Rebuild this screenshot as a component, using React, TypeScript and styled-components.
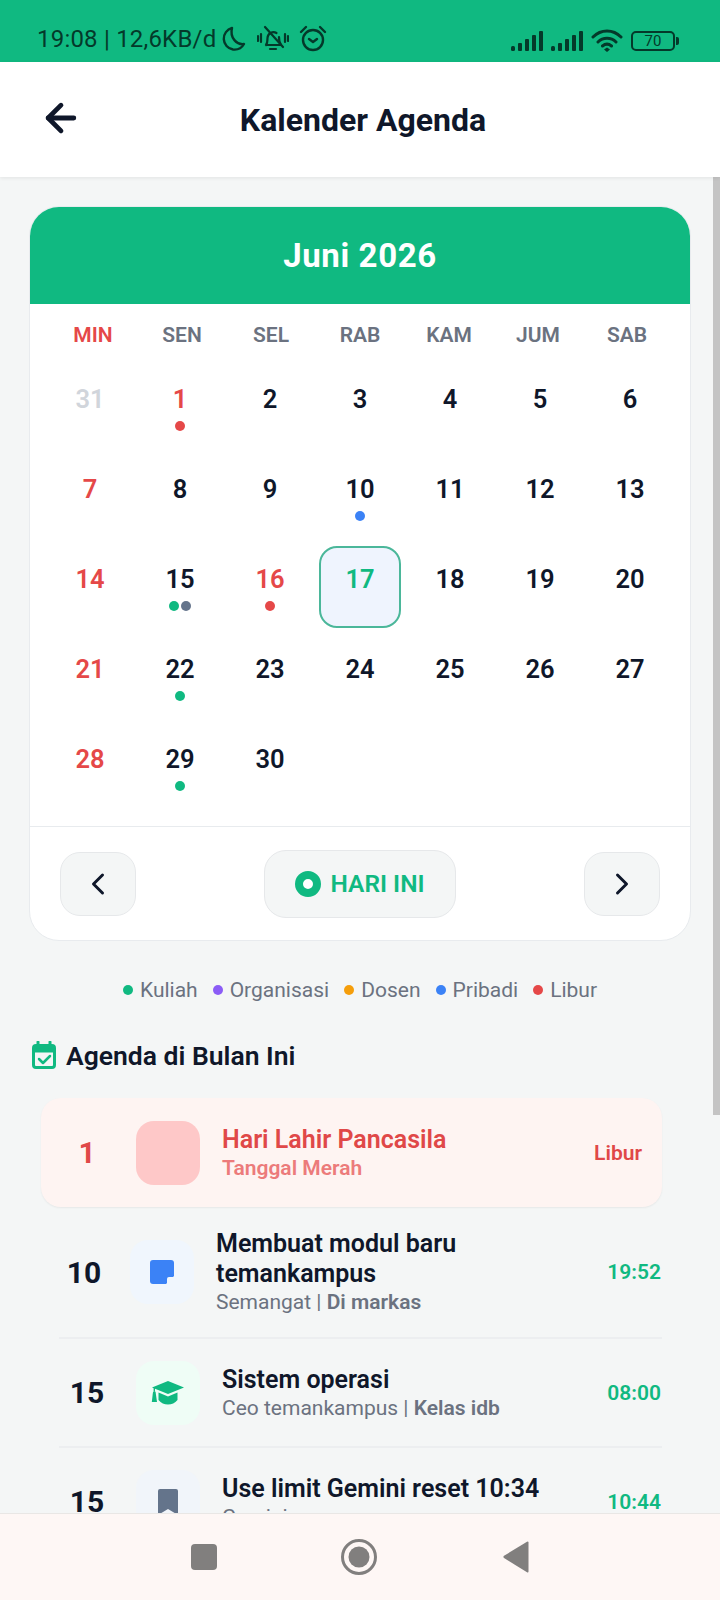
import React from "react";
import styled, { createGlobalStyle } from "styled-components";
import { ArrowLeft, ChevronLeft, ChevronRight } from "lucide-react";

const Global = createGlobalStyle`
  html, body { margin: 0; padding: 0; background: #f4f6f6; }
  * { box-sizing: border-box; }
  body { font-family: Roboto, "Liberation Sans", sans-serif; }
`;

const Page = styled.div`
  position: relative;
  width: 720px;
  height: 1600px;
  display: flex;
  flex-direction: column;
  overflow: hidden;
  background: #f4f6f6;
`;

const StatusBar = styled.div`
  height: 62px;
  flex: none;
  background: #10b981;
  color: #04392a;
  display: flex;
  align-items: flex-end;
  justify-content: space-between;
  padding: 0 42px 9px 37px;
`;
const StatusLeft = styled.div`
  display: flex;
  align-items: center;
  gap: 5px;
`;
const StatusText = styled.span`
  font-size: 24px;
  line-height: 26px;
  letter-spacing: 0.2px;
`;
const StatusRight = styled.div`
  display: flex;
  align-items: center;
  gap: 8px;
`;
const BatteryBox = styled.div`
  position: relative;
  width: 44px;
  height: 20px;
  border: 2px solid #04392a;
  border-radius: 5px;
  font-size: 15px;
  line-height: 16px;
  text-align: center;
  margin-right: 3px;
  &::after {
    content: "";
    position: absolute;
    right: -6px;
    top: 4px;
    width: 3px;
    height: 8px;
    border-radius: 0 2px 2px 0;
    background: #04392a;
  }
`;

const Header = styled.header`
  height: 115px;
  flex: none;
  background: #fff;
  box-shadow: 0 1px 4px rgba(0, 0, 0, 0.08);
  display: flex;
  align-items: center;
  justify-content: center;
  padding-left: 6px;
  position: relative;
  z-index: 2;
  color: #0f172a;
`;
const BackButton = styled.div`
  position: absolute;
  left: 39px;
  top: 34px;
  display: flex;
`;
const Title = styled.h1`
  margin: 0;
  font-size: 32px;
  font-weight: 700;
  line-height: 36px;
`;

const Content = styled.main`
  flex: 1;
  min-height: 0;
  overflow: hidden;
  padding: 29px 29px 0;
`;

const Card = styled.section`
  width: 662px;
  height: 735px;
  background: #fff;
  border: 1px solid #e8ebee;
  border-radius: 30px;
  overflow: hidden;
`;
const Month = styled.div`
  height: 98px;
  margin: -1px -1px 0;
  background: #10b981;
  color: #fff;
  font-size: 33px;
  font-weight: 700;
  letter-spacing: 0.6px;
  display: flex;
  align-items: center;
  justify-content: center;
`;
const WeekRow = styled.div`
  display: grid;
  grid-template-columns: repeat(7, 89px);
  justify-content: center;
  padding-top: 19px;
  height: 63px;
`;
const WeekDay = styled.div<{ $red?: boolean }>`
  text-align: center;
  font-size: 21px;
  line-height: 24px;
  font-weight: 600;
  color: ${(p) => (p.$red ? "#e54848" : "#6b7280")};
`;
const Grid = styled.div`
  display: grid;
  grid-template-columns: repeat(7, 80px);
  grid-auto-rows: 80px;
  gap: 10px;
  justify-content: center;
  height: 460px;
`;
const Cell = styled.div<{ $today?: boolean }>`
  display: flex;
  flex-direction: column;
  align-items: center;
  padding-top: ${(p) => (p.$today ? "18px" : "19px")};
  margin: ${(p) => (p.$today ? "-1px" : "0")};
  border-radius: 18px;
  border: ${(p) => (p.$today ? "2px solid #4bb79a" : "none")};
  background: ${(p) => (p.$today ? "#eff4fe" : "transparent")};
`;
const DayNum = styled.span<{ $color: string }>`
  font-size: 25.5px;
  line-height: 26px;
  font-weight: 600;
  color: ${(p) => p.$color};
`;
const Dots = styled.div`
  display: flex;
  gap: 2px;
  margin-top: 9px;
`;
const Dot = styled.span<{ $color: string; $size?: number }>`
  width: ${(p) => p.$size ?? 10}px;
  height: ${(p) => p.$size ?? 10}px;
  border-radius: 50%;
  background: ${(p) => p.$color};
  flex: none;
`;
const CardFooter = styled.div`
  border-top: 1px solid #e8ebee;
  height: 114px;
  padding: 0 30px;
  display: flex;
  align-items: center;
  justify-content: space-between;
  margin-top: -1px;
`;
const NavButton = styled.div`
  width: 76px;
  height: 64px;
  border-radius: 20px;
  background: #f4f6f6;
  border: 1px solid #e6e8ea;
  display: flex;
  align-items: center;
  justify-content: center;
  color: #0f172a;
`;
const TodayButton = styled.div`
  width: 192px;
  height: 68px;
  border-radius: 22px;
  background: #f4f6f6;
  border: 1px solid #e6e8ea;
  display: flex;
  align-items: center;
  justify-content: center;
  gap: 9px;
  color: #10b981;
  font-size: 24.5px;
  font-weight: 600;
`;
const Ring = styled.span`
  width: 26px;
  height: 26px;
  border-radius: 50%;
  border: 8px solid #10b981;
  background: #fff;
`;

const Legend = styled.div`
  display: flex;
  justify-content: center;
  align-items: center;
  gap: 15px;
  margin-top: 37px;
  height: 24px;
`;
const LegendItem = styled.div`
  display: flex;
  align-items: center;
  gap: 7px;
  font-size: 21px;
  color: #6b7280;
`;

const SectionHead = styled.div`
  display: flex;
  align-items: center;
  gap: 10px;
  margin-top: 37px;
  margin-left: 3px;
  height: 32px;
`;
const SectionTitle = styled.h2`
  margin: 0;
  font-size: 26.5px;
  font-weight: 600;
  color: #0f172a;
`;

const List = styled.div`
  margin: 27px 29px 0 12px;
  display: flex;
  flex-direction: column;
`;
const Row = styled.div<{ $height: number; $holiday?: boolean }>`
  display: flex;
  align-items: center;
  flex: none;
  height: ${(p) => p.$height}px;
  padding: 0 ${(p) => (p.$holiday ? "18px" : "0")};
  margin-left: ${(p) => (p.$holiday ? "0" : "18px")};
  border-radius: ${(p) => (p.$holiday ? "20px" : "0")};
  background: ${(p) => (p.$holiday ? "#fef4f2" : "transparent")};
  box-shadow: ${(p) => (p.$holiday ? "0 1px 2px rgba(0,0,0,0.06)" : "none")};
  border-bottom: ${(p) => (p.$holiday ? "none" : "2px solid #eceef0")};
`;
const DateNum = styled.div<{ $red?: boolean; $width: number }>`
  width: ${(p) => p.$width}px;
  flex: none;
  text-align: center;
  font-size: 30px;
  font-weight: 700;
  color: ${(p) => (p.$red ? "#e04848" : "#0f172a")};
`;
const IconBox = styled.div<{ $bg: string }>`
  width: 64px;
  height: 64px;
  flex: none;
  margin-left: 21px;
  border-radius: 18px;
  background: ${(p) => p.$bg};
  display: flex;
  align-items: center;
  justify-content: center;
`;
const Body = styled.div`
  flex: 1;
  min-width: 0;
  margin-left: 22px;
`;
const ItemTitle = styled.div<{ $red?: boolean }>`
  font-size: 25px;
  line-height: 30px;
  margin-top: 1px;
  font-weight: 600;
  color: ${(p) => (p.$red ? "#e04848" : "#0f172a")};
`;
const ItemSub = styled.div<{ $red?: boolean }>`
  font-size: 21px;
  line-height: 27px;
  font-weight: ${(p) => (p.$red ? 600 : 400)};
  color: ${(p) => (p.$red ? "#ec7b7b" : "#6b7280")};
  b { font-weight: 600; }
`;
const Time = styled.div<{ $red?: boolean }>`
  flex: none;
  font-size: 21px;
  font-weight: 600;
  margin-right: ${(p) => (p.$red ? "2px" : "1px")};
  color: ${(p) => (p.$red ? "#e04848" : "#10b981")};
`;

const Scrollbar = styled.div`
  position: absolute;
  right: 0;
  top: 177px;
  width: 7px;
  height: 938px;
  background: #c4c4c4;
`;

const BottomNav = styled.nav`
  position: absolute;
  left: 0;
  right: 0;
  bottom: 0;
  height: 87px;
  background: #fef7f5;
  border-top: 1px solid #e9e7e5;
  display: flex;
  align-items: center;
  gap: 123px;
  padding: 0 0 1px 191px;
`;

const G = "#10b981", R = "#e54848", B = "#3b82f6", S = "#64748b";
const dark = "#0f172a";

type D = { n: number; color?: string; dots?: string[]; today?: boolean };
const days: D[] = [
  { n: 31, color: "#d1d5db" }, { n: 1, color: R, dots: [R] }, { n: 2 }, { n: 3 }, { n: 4 }, { n: 5 }, { n: 6 },
  { n: 7, color: R }, { n: 8 }, { n: 9 }, { n: 10, dots: [B] }, { n: 11 }, { n: 12 }, { n: 13 },
  { n: 14, color: R }, { n: 15, dots: [G, S] }, { n: 16, color: R, dots: [R] }, { n: 17, color: G, today: true }, { n: 18 }, { n: 19 }, { n: 20 },
  { n: 21, color: R }, { n: 22, dots: [G] }, { n: 23 }, { n: 24 }, { n: 25 }, { n: 26 }, { n: 27 },
  { n: 28, color: R }, { n: 29, dots: [G] }, { n: 30 },
];

const Signal = () => (
  <svg width="32" height="20" viewBox="0 0 32 20" fill="#04392a">
    <rect x="0" y="15" width="4" height="5" rx="1.5" />
    <rect x="7" y="12" width="4" height="8" rx="1" />
    <rect x="14" y="8" width="4" height="12" rx="1" />
    <rect x="21" y="4" width="4" height="16" rx="1" />
    <rect x="28" y="0" width="4" height="20" rx="1" />
  </svg>
);

export default function App() {
  return (
    <Page>
      <Global />
      <StatusBar>
        <StatusLeft>
          <StatusText>19:08 | 12,6KB/d</StatusText>
          <svg width="26" height="26" viewBox="0 0 26 26" fill="none" stroke="#04392a" strokeWidth="2.4" strokeLinecap="round" strokeLinejoin="round">
            <path d="M11 2a11 11 0 0 0 1 21.500c5 .6 9-2 11-5.500C16 19 8.500 12 11 2z" />
          </svg>
          <svg width="32" height="28" viewBox="0 0 32 28" fill="none" stroke="#04392a" strokeWidth="2.2" strokeLinecap="round" strokeLinejoin="round" style={{ marginLeft: 5 }}>
            <path d="M9 20c1.500-2 1.500-4 1.500-7a6 6 0 0 1 9-5M22 12c0 3 .5 6 2 8H9" />
            <path d="M13 24h6" />
            <path d="M8 2l18 20" />
            <path d="M1 11v5M4 9v8M28 9v8M31 11v5" />
          </svg>
          <svg width="28" height="28" viewBox="0 0 28 28" fill="none" stroke="#04392a" strokeWidth="2.4" strokeLinecap="round" strokeLinejoin="round" style={{ marginLeft: 5 }}>
            <circle cx="14" cy="15" r="10" />
            <path d="M2 7l5-5M26 7l-5-5M10 14l4 3 4-3" />
          </svg>
        </StatusLeft>
        <StatusRight>
          <Signal />
          <Signal />
          <svg width="32" height="24" viewBox="0 0 32 24" fill="none" stroke="#04392a" strokeWidth="3" strokeLinecap="round">
            <path d="M2 8c8-8 20-8 28 0M7 13c5-5 13-5 18 0M11.500 17c3-2.500 6-2.500 9 0" />
            <path d="M16 23l-3-2.500 3-2 3 2z" fill="#04392a" stroke="none" />
          </svg>
          <BatteryBox>70</BatteryBox>
        </StatusRight>
      </StatusBar>

      <Header>
        <BackButton><ArrowLeft size={44} strokeWidth={2.6} color="#0f172a" /></BackButton>
        <Title>Kalender Agenda</Title>
      </Header>

      <Content>
        <Card>
          <Month>Juni 2026</Month>
          <WeekRow>
            {["MIN", "SEN", "SEL", "RAB", "KAM", "JUM", "SAB"].map((d, i) => (
              <WeekDay key={d} $red={i === 0}>{d}</WeekDay>
            ))}
          </WeekRow>
          <Grid>
            {days.map((d) => (
              <Cell key={d.n} $today={d.today}>
                <DayNum $color={d.color ?? dark}>{d.n}</DayNum>
                {d.dots && (
                  <Dots>
                    {d.dots.map((c, j) => <Dot key={j} $color={c} />)}
                  </Dots>
                )}
              </Cell>
            ))}
          </Grid>
          <CardFooter>
            <NavButton><ChevronLeft size={36} strokeWidth={2} /></NavButton>
            <TodayButton><Ring />HARI INI</TodayButton>
            <NavButton><ChevronRight size={36} strokeWidth={2} /></NavButton>
          </CardFooter>
        </Card>

        <Legend>
          {[["Kuliah", G], ["Organisasi", "#8b5cf6"], ["Dosen", "#f59e0b"], ["Pribadi", B], ["Libur", R]].map(([l, c]) => (
            <LegendItem key={l}><Dot $color={c} />{l}</LegendItem>
          ))}
        </Legend>

        <SectionHead>
          <svg width="24" height="28" viewBox="0 0 24 28" fill="none">
            <rect x="1.500" y="4.500" width="21" height="22" rx="2.500" stroke={G} strokeWidth="3" />
            <rect x="1.500" y="4.500" width="21" height="7" fill={G} />
            <path d="M6 1v5M18 1v5" stroke={G} strokeWidth="3" strokeLinecap="round" />
            <path d="M7 18l4 4 7-7" stroke={G} strokeWidth="2.500" strokeLinecap="round" strokeLinejoin="round" />
          </svg>
          <SectionTitle>Agenda di Bulan Ini</SectionTitle>
        </SectionHead>

        <List>
          <Row $height={109} $holiday>
            <DateNum $red $width={56}>1</DateNum>
            <IconBox $bg="#fec8c8" />
            <Body>
              <ItemTitle $red>Hari Lahir Pancasila</ItemTitle>
              <ItemSub $red>Tanggal Merah</ItemSub>
            </Body>
            <Time $red>Libur</Time>
          </Row>
          <Row $height={132}>
            <DateNum $width={50}>10</DateNum>
            <IconBox $bg="#f0f6fd">
              <svg width="24" height="24" viewBox="0 0 24 24">
                <path d="M3 0h18a3 3 0 0 1 3 3v13l-8 8H3a3 3 0 0 1-3-3V3a3 3 0 0 1 3-3z" fill={B} />
                <path d="M24 17h-5a2 2 0 0 0-2 2v5z" fill="#f0f6fd" />
              </svg>
            </IconBox>
            <Body>
              <ItemTitle>Membuat modul baru temankampus</ItemTitle>
              <ItemSub>Semangat | <b>Di markas</b></ItemSub>
            </Body>
            <Time>19:52</Time>
          </Row>
          <Row $height={109}>
            <DateNum $width={56}>15</DateNum>
            <IconBox $bg="#effdf6">
              <svg width="34" height="24" viewBox="0 0 34 24" fill={G}>
                <path d="M17 0L33 6.500 17 13 4 7.700V10H2.600V7.200L1 6.500z" />
                <path d="M7.500 11.500L17 15.500l9.500-4V19c-2.500 3-5.800 4.500-9.500 4.500S10 22 7.500 19z" />
                <path d="M3.300 10c1 0 1.500 1 1.500 2.500L6 21H.8l1-8.500C2 11 2.400 10 3.300 10z" />
              </svg>
            </IconBox>
            <Body>
              <ItemTitle>Sistem operasi</ItemTitle>
              <ItemSub>Ceo temankampus | <b>Kelas idb</b></ItemSub>
            </Body>
            <Time>08:00</Time>
          </Row>
          <Row $height={109}>
            <DateNum $width={56}>15</DateNum>
            <IconBox $bg="#f1f5fa">
              <svg width="20" height="26" viewBox="0 0 20 26">
                <path d="M2 0h16a2 2 0 0 1 2 2v24l-10-6-10 6V2a2 2 0 0 1 2-2z" fill={S} />
              </svg>
            </IconBox>
            <Body>
              <ItemTitle>Use limit Gemini reset 10:34</ItemTitle>
              <ItemSub>Gemini</ItemSub>
            </Body>
            <Time>10:44</Time>
          </Row>
        </List>
      </Content>

      <Scrollbar />
      <BottomNav>
        <svg width="26" height="26" viewBox="0 0 26 26"><rect width="26" height="26" rx="4" fill="#817f7e" /></svg>
        <svg width="38" height="38" viewBox="0 0 38 38">
          <circle cx="19" cy="19" r="16.500" fill="none" stroke="#817f7e" strokeWidth="3" />
          <circle cx="19" cy="19" r="10.500" fill="#817f7e" />
        </svg>
        <svg width="26" height="32" viewBox="0 0 26 32" style={{ marginLeft: 2 }}><path d="M25.500 1.500v29a1 1 0 0 1-1.500.8L1 17a1.500 1.500 0 0 1 0-2.200L24 .8a1 1 0 0 1 1.500.7z" fill="#817f7e" /></svg>
      </BottomNav>
    </Page>
  );
}
